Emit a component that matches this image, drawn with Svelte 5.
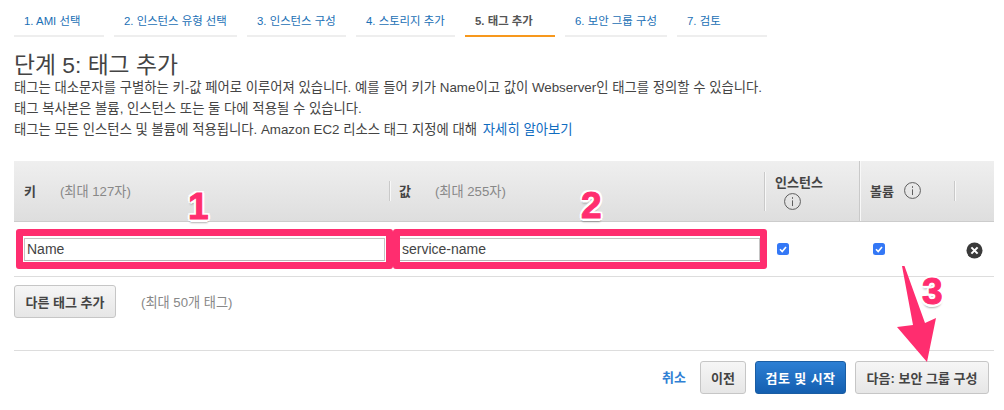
<script>
  const steps = [
    { label: '1. AMI 선택', w: 90 },
    { label: '2. 인스턴스 유형 선택', w: 123 },
    { label: '3. 인스턴스 구성', w: 99 },
    { label: '4. 스토리지 추가', w: 99 },
    { label: '5. 태그 추가', w: 90, active: true },
    { label: '6. 보안 그룹 구성', w: 102 },
    { label: '7. 검토', w: 90 }
  ];
</script>

<div class="page">
  <nav class="steps">
    {#each steps as s}
      <div class="step" class:active={s.active} style="width:{s.w}px">{s.label}</div>
    {/each}
  </nav>

  <h1>단계 5: 태그 추가</h1>
  <div class="desc">
    <p>태그는 대소문자를 구별하는 키-값 페어로 이루어져 있습니다. 예를 들어 키가 Name이고 값이 Webserver인 태그를 정의할 수 있습니다.</p>
    <p>태그 복사본은 볼륨, 인스턴스 또는 둘 다에 적용될 수 있습니다.</p>
    <p>태그는 모든 인스턴스 및 볼륨에 적용됩니다. Amazon EC2 리소스 태그 지정에 대해 <a href="#more">자세히 알아보기</a></p>
  </div>

  <div class="table">
    <div class="head">
      <div class="hc key"><b>키</b><span class="hint">(최대 127자)</span></div>
      <div class="hc val"><i class="sep"></i><b>값</b><span class="hint">(최대 255자)</span></div>
      <div class="hc inst"><i class="sep tall"></i><b>인스턴스</b>
        <svg class="info" viewBox="0 0 18 18"><circle cx="9" cy="9" r="8.4" /><path d="M9 4.4v1.8M9 7.8v6" /></svg>
      </div>
      <div class="hc vol"><i class="sep full"></i><b>볼륨</b>
        <svg class="info" viewBox="0 0 18 18"><circle cx="9" cy="9" r="8.4" /><path d="M9 4.4v1.8M9 7.8v6" /></svg>
      </div>
      <div class="hc last"><i class="sep"></i></div>
    </div>
    <div class="row">
      <div class="cell key"><input value="Name" /></div>
      <div class="cell val"><input value="service-name" /></div>
      <div class="cell chk first">
        <svg class="check" viewBox="0 0 12 12"><rect width="12" height="12" rx="2.5" /><path d="M3 6.3l2.2 2.2L9 3.9" /></svg>
      </div>
      <div class="cell chk">
        <svg class="check" viewBox="0 0 12 12"><rect width="12" height="12" rx="2.5" /><path d="M3 6.3l2.2 2.2L9 3.9" /></svg>
      </div>
      <div class="cell del">
        <svg class="x" viewBox="0 0 18 18"><circle cx="9" cy="9" r="8.5" /><path d="M5.7 5.7l6.6 6.6M12.3 5.7l-6.6 6.6" /></svg>
      </div>
    </div>
  </div>

  <div class="add">
    <button class="btn">다른 태그 추가</button>
    <span class="limit">(최대 50개 태그)</span>
  </div>

  <footer>
    <a class="cancel" href="#cancel">취소</a>
    <button class="btn prev">이전</button>
    <button class="btn primary">검토 및 시작</button>
    <button class="btn next">다음: 보안 그룹 구성</button>
  </footer>

  <div class="mark box1"></div>
  <div class="mark box2"></div>
  <span class="num n1">1</span>
  <span class="num n2">2</span>
  <span class="num n3">3</span>
  <svg class="arrow" viewBox="0 0 60 110">
    <path d="M12 8L14.5 8L35 65L46 60L37 104L7 69L23 67Z" />
  </svg>
</div>

<style>
  :global(body) { margin: 0; background: #fff; }
  .page {
    position: relative;
    width: 1004px;
    height: 410px;
    overflow: hidden;
    padding: 0 10px 0 14px;
    box-sizing: border-box;
    font-family: "Liberation Sans", "Noto Sans CJK KR", sans-serif;
    font-size: 13px;
    color: #444;
  }
  .steps { display: flex; gap: 10px; padding-top: 11px; }
  .step {
    box-sizing: border-box;
    height: 26px;
    padding-top: 2px;
    padding-left: 10px;
    border-bottom: 2px solid #eee;
    font-size: 11.4px;
    line-height: 16px;
    color: #1a6fb5;
    white-space: nowrap;
  }
  .step.active { color: #555; font-weight: 700; border-bottom-color: #f7981d; }
  h1 {
    margin: 14px 0 0;
    font-size: 22.8px;
    line-height: 28px;
    font-weight: 400;
    color: #444;
  }
  .desc { margin-top: -2px; }
  .desc p { margin: 0; height: 21px; line-height: 21px; font-size: 13.35px; white-space: nowrap; }
  .desc a { color: #0f6cbf; text-decoration: none; margin-left: 2px; }

  .table { margin-top: 21px; width: 980px; }
  .head {
    display: grid;
    grid-template-columns: 375px 375px 95px 95px 40px;
    height: 61px;
    box-sizing: border-box;
    background: linear-gradient(#efefef, #dedede);
    border-bottom: 1px solid #ccc;
  }
  .hc { position: relative; display: flex; align-items: center; font-size: 13px; color: #444; }
  .hc b { font-weight: 700; }
  .hint { color: #888; font-weight: 400; font-size: 13.2px; margin-left: 24px; }
  .hc.key { padding: 0 0 2px 10px; }
  .hc.val { padding: 0 0 2px 10px; }
  .hc.inst {
    flex-direction: column;
    align-items: flex-start;
    justify-content: center;
    padding: 0 0 0 11px;
    line-height: 19px;
  }
  .hc.vol { padding: 0 0 1px 11px; gap: 10px; }
  .sep { position: absolute; left: 0; top: 20px; height: 20px; width: 1px; background: #c9c9c9; box-shadow: 1px 0 0 #f8f8f8; }
  .sep.tall { top: 11px; height: 39px; }
  .sep.full { top: 0; height: 60px; }
  .info { width: 17px; height: 17px; fill: none; stroke: #555; stroke-width: 1; }
  .inst .info { margin: 1px 0 0 9px; }
  .row {
    display: grid;
    grid-template-columns: 375px 375px 95px 95px 40px;
    height: 55px;
    box-sizing: border-box;
    border-bottom: 1px solid #ddd;
    align-items: center;
  }
  .cell { display: flex; align-items: center; box-sizing: border-box; }
  .cell.key { padding: 0 4px 0 10px; }
  .cell.val { padding: 0 4px 0 10px; }
  input {
    width: 100%;
    height: 23px;
    box-sizing: border-box;
    border: 1px solid #c4c4c4;
    border-bottom-color: #b5b5b5;
    padding: 0 2px;
    font: 14px "Liberation Sans", sans-serif;
    color: #444;
    background: #fff;
    outline: none;
  }
  .cell.chk { padding: 0 0 0 14px; }
  .cell.chk.first { padding-left: 13px; }
  .check { width: 12px; height: 12px; }
  .check rect { fill: #3478f6; }
  .check path { fill: none; stroke: #fff; stroke-width: 1.6; }
  .cell.del { padding: 2px 0 0 12px; }
  .x { width: 17px; height: 17px; }
  .x circle { fill: #3a3a3a; }
  .x path { stroke: #fff; stroke-width: 2.2; fill: none; }

  .btn {
    box-sizing: border-box;
    height: 33px;
    padding: 0;
    border: 1px solid #c6c6c6;
    border-radius: 3px;
    background: linear-gradient(#f6f6f6, #e6e6e6);
    font-family: inherit;
    font-size: 13px;
    font-weight: 700;
    color: #444;
    white-space: nowrap;
  }
  .add { display: flex; align-items: center; margin-top: 8px; }
  .add .btn { width: 102px; }
  .limit { margin-left: 25px; color: #888; font-size: 13.2px; }

  footer {
    margin-top: 32px;
    width: 980px;
    height: 44px;
    box-sizing: border-box;
    border-top: 1px solid #ddd;
    padding: 10px 5px 0 0;
    display: flex;
    justify-content: flex-end;
    align-items: flex-start;
    gap: 9px;
  }
  .cancel {
    color: #2f80d4;
    font-size: 13px;
    font-weight: 700;
    text-decoration: none;
    line-height: 33px;
    margin-right: 5px;
  }
  .prev { width: 46px; }
  .primary {
    width: 91px;
    color: #fff;
    letter-spacing: 0.4px;
    background: linear-gradient(#2c7fd4, #145fb0);
    border-color: #1a5da3;
  }
  .next { width: 134px; }

  .mark { position: absolute; box-sizing: border-box; border: 7px solid #ff2d6f; border-radius: 3px; height: 40px; top: 229px; }
  .box1 { left: 16px; width: 377px; }
  .box2 { left: 393px; width: 374px; }
  .num {
    position: absolute;
    font-size: 37px;
    line-height: 37px;
    font-weight: 700;
    color: #ff2d6f;
    -webkit-text-stroke: 1px #ff2d6f;
    text-shadow:
      2.5px 0 0 #fff, -2.5px 0 0 #fff, 0 2.5px 0 #fff, 0 -2.5px 0 #fff,
      2px 2px 0 #fff, -2px 2px 0 #fff, 2px -2px 0 #fff, -2px -2px 0 #fff,
      0 3.5px 2px rgba(0,0,0,.3);
  }
  .n1 { left: 188px; top: 188px; }
  .n2 { left: 581px; top: 187px; }
  .n3 { left: 922px; top: 273px; }
  .arrow { position: absolute; left: 890px; top: 258px; width: 60px; height: 110px; }
  .arrow path { fill: #ff2d6f; }
</style>
